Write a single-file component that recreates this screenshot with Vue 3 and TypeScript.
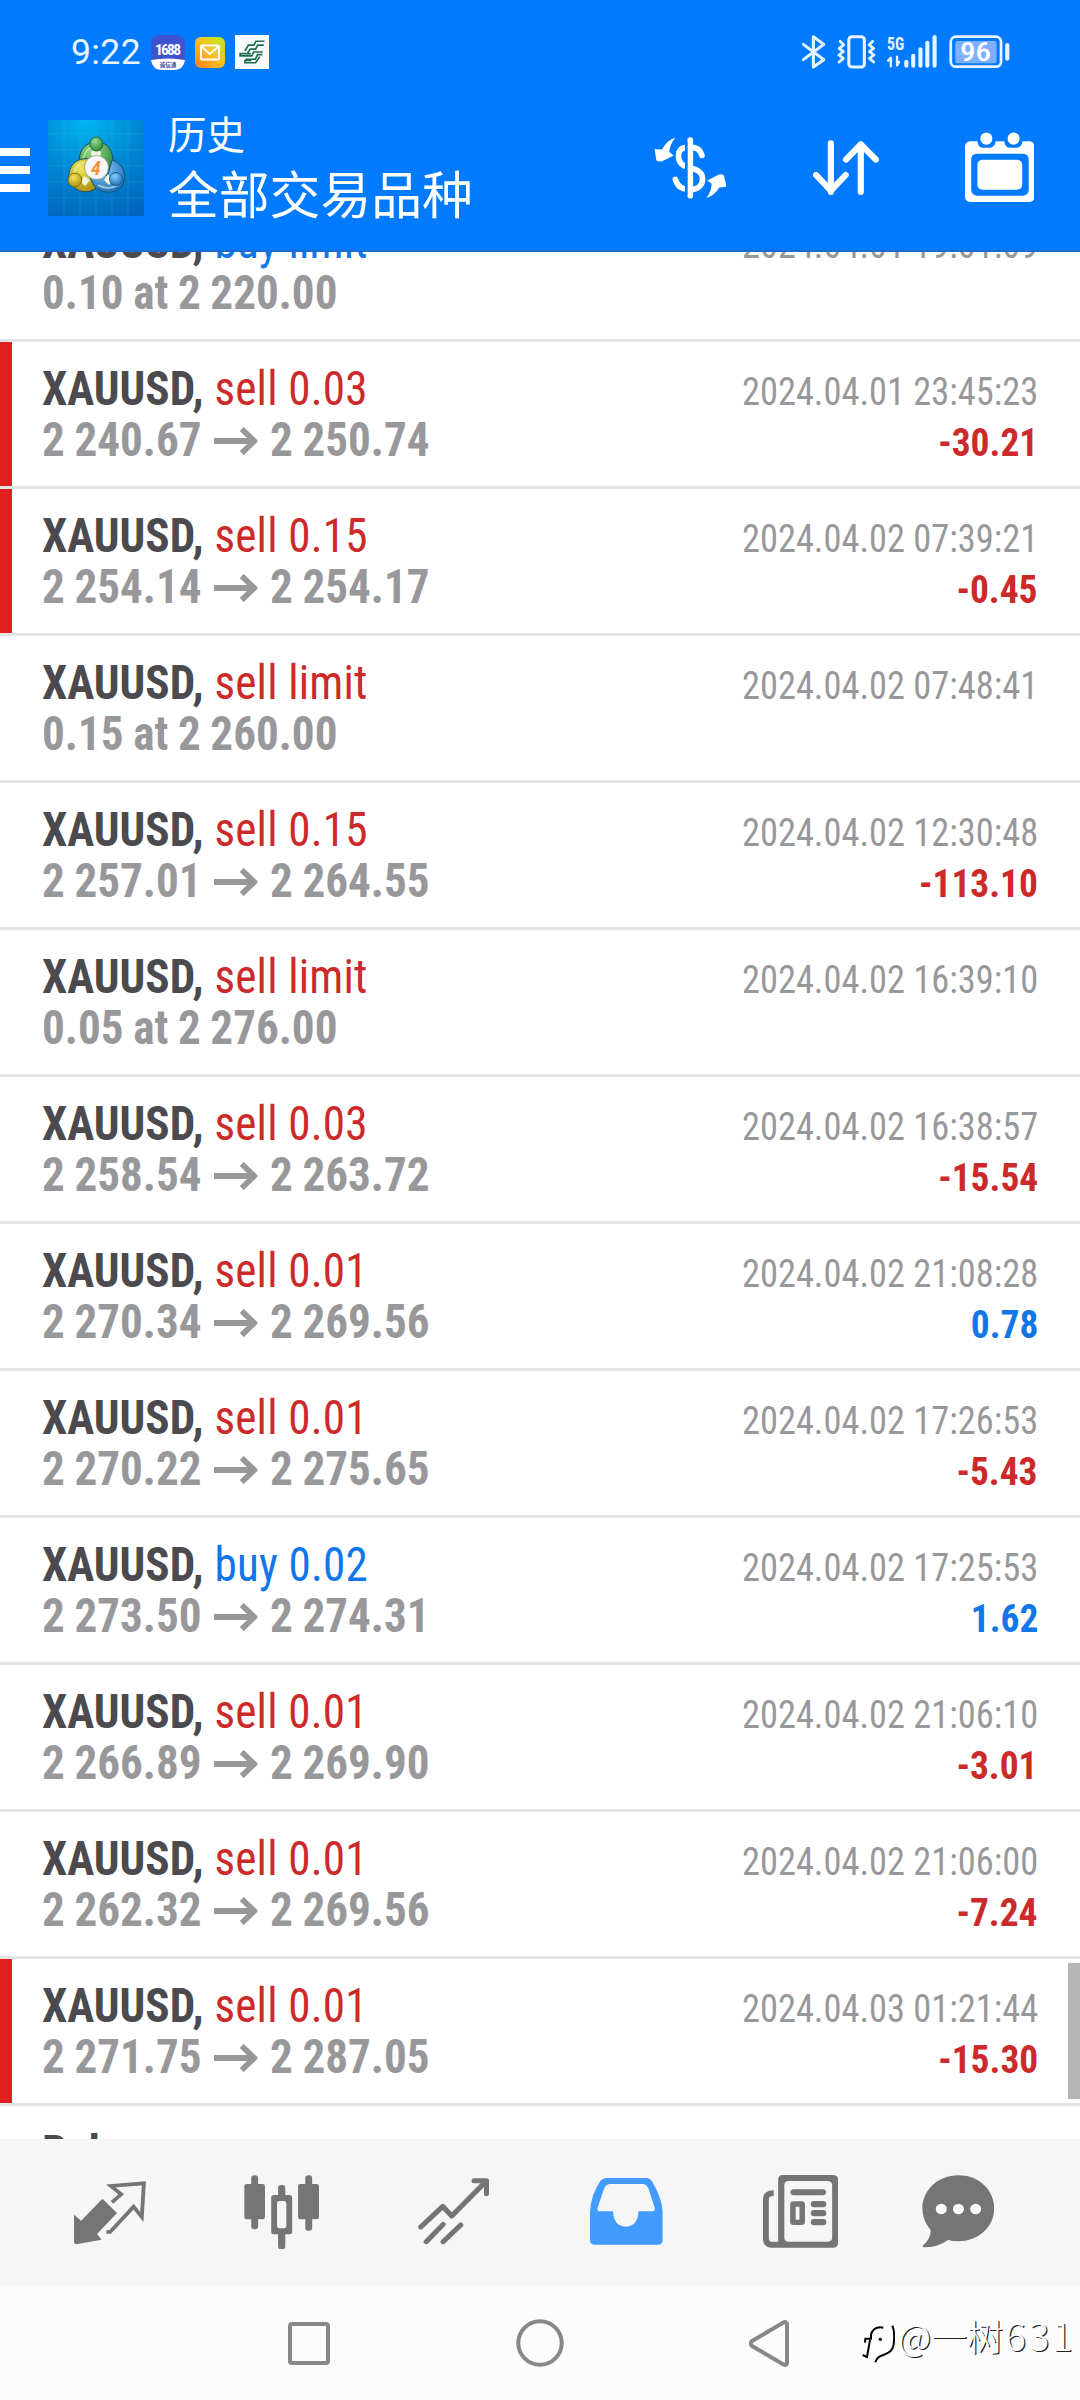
<script setup lang="ts">
interface Entry {
  side: 'buy' | 'sell'
  label: string
  open?: string
  close?: string
  order?: string
  time: string
  profit?: string
  marked?: boolean
}

const entries: Entry[] = [
  { side: 'buy', label: 'buy limit', order: '0.10 at 2 220.00', time: '2024.04.01 19:01:09' },
  { side: 'sell', label: 'sell 0.03', open: '2 240.67', close: '2 250.74', time: '2024.04.01 23:45:23', profit: '-30.21', marked: true },
  { side: 'sell', label: 'sell 0.15', open: '2 254.14', close: '2 254.17', time: '2024.04.02 07:39:21', profit: '-0.45', marked: true },
  { side: 'sell', label: 'sell limit', order: '0.15 at 2 260.00', time: '2024.04.02 07:48:41' },
  { side: 'sell', label: 'sell 0.15', open: '2 257.01', close: '2 264.55', time: '2024.04.02 12:30:48', profit: '-113.10' },
  { side: 'sell', label: 'sell limit', order: '0.05 at 2 276.00', time: '2024.04.02 16:39:10' },
  { side: 'sell', label: 'sell 0.03', open: '2 258.54', close: '2 263.72', time: '2024.04.02 16:38:57', profit: '-15.54' },
  { side: 'sell', label: 'sell 0.01', open: '2 270.34', close: '2 269.56', time: '2024.04.02 21:08:28', profit: '0.78' },
  { side: 'sell', label: 'sell 0.01', open: '2 270.22', close: '2 275.65', time: '2024.04.02 17:26:53', profit: '-5.43' },
  { side: 'buy', label: 'buy 0.02', open: '2 273.50', close: '2 274.31', time: '2024.04.02 17:25:53', profit: '1.62' },
  { side: 'sell', label: 'sell 0.01', open: '2 266.89', close: '2 269.90', time: '2024.04.02 21:06:10', profit: '-3.01' },
  { side: 'sell', label: 'sell 0.01', open: '2 262.32', close: '2 269.56', time: '2024.04.02 21:06:00', profit: '-7.24' },
  { side: 'sell', label: 'sell 0.01', open: '2 271.75', close: '2 287.05', time: '2024.04.03 01:21:44', profit: '-15.30', marked: true },
]

const isLoss = (profit: string) => profit.startsWith('-')
</script>

<template>
  <div class="screen">
    <header class="header">
      <div class="status">
        <span class="clock">9:22</span>
        <svg class="ic-1688" viewBox="0 0 34 35" width="34" height="35">
          <rect width="34" height="34" rx="8" fill="#3d53d0" />
          <path d="M0 25Q17 22 34 25Q33 35 22 35H12Q1 35 0 25Z" fill="#fff" />
          <text x="17" y="19.5" text-anchor="middle" font-family="Roboto" font-stretch="75%" font-weight="700" font-size="15.5" textLength="26" fill="#fff">1688</text>
          <text x="17" y="32" text-anchor="middle" font-family="Noto Sans CJK SC" font-weight="700" font-size="5.5" fill="#3d4a9a">诚信通</text>
        </svg>
        <svg class="ic-mail" viewBox="0 0 30 31" width="30" height="31">
          <defs>
            <linearGradient id="mail" x1="0" y1="1" x2="1" y2="0">
              <stop offset="0" stop-color="#ff7a1c" /><stop offset=".5" stop-color="#f9bf1f" /><stop offset="1" stop-color="#b4ee22" />
            </linearGradient>
          </defs>
          <rect width="30" height="31" rx="6" fill="url(#mail)" />
          <rect x="6" y="8.5" width="18" height="14" rx="1" fill="none" stroke="#fff" stroke-width="2" />
          <path d="M7 10l8 7 8-7" fill="none" stroke="#fff" stroke-width="2" />
        </svg>
        <svg class="ic-bank" viewBox="682 103 99 104" width="34" height="34" preserveAspectRatio="none">
          <rect x="682" y="103" width="99" height="104" fill="#fff" />
          <g fill="none" stroke="#1d6b50" stroke-width="5">
            <path d="M768 122H743L737 134H721L711 152" />
            <path d="M766 134H748L742 146H726L719 158" />
            <path d="M763 155H736L731 167H697V160H728" />
            <path d="M762 163H748L741 177H712" />
            <path d="M754 169L742 188H711V181H730" />
          </g>
        </svg>
        <svg class="ic-system" viewBox="762 104 604 108" width="208" height="36" preserveAspectRatio="none">
          <g fill="none" stroke="#e6f4ff" stroke-linejoin="round" stroke-linecap="round">
            <path d="M766 135L825 181L795 203V112L825 135L766 181" stroke-width="9" />
            <rect x="898" y="112" width="45" height="91" rx="9" stroke-width="9" />
            <path d="M873 126l10 11-13 10 12 10-13 10 13 10-12 11M967 126l-10 11 13 10-12 10 13 10-13 10 12 11" stroke-width="8.5" />
            <path d="M1012 184l8-9V201M1038 172V198L1044 188" stroke-width="7" />
            <path d="M1065 187V199M1085 169V199M1106 150V199M1126 130V199M1147 113V199" stroke-width="12" />
            <rect x="1194" y="112" width="146" height="90" rx="15" stroke-width="8" />
            <path d="M1358 137V178" stroke-width="12" />
          </g>
          <rect x="1207" y="125" width="120" height="67" rx="6" fill="#7fb0ff" />
          <text x="1009" y="151" font-family="Roboto" font-stretch="75%" font-weight="700" font-size="56" textLength="50" lengthAdjust="spacingAndGlyphs" fill="#e6f4ff">5G</text>
          <text x="1221" y="185" font-family="Roboto" font-weight="500" font-size="80" textLength="90" lengthAdjust="spacingAndGlyphs" fill="#fff">96</text>
        </svg>
      </div>

      <div class="toolbar">
        <div class="burger"><i /><i /><i /></div>
        <svg class="logo" viewBox="0 0 96 96" width="96" height="96">
          <defs>
            <radialGradient id="sky" cx=".4" cy="0" r="1.1">
              <stop offset="0" stop-color="#00b4f2" /><stop offset=".5" stop-color="#0088d4" /><stop offset="1" stop-color="#0064bd" />
            </radialGradient>
            <radialGradient id="green" cx=".4" cy=".3" r=".8"><stop offset="0" stop-color="#9ade8c" /><stop offset="1" stop-color="#1f7d35" /></radialGradient>
            <radialGradient id="gold" cx=".4" cy=".3" r=".8"><stop offset="0" stop-color="#f5e655" /><stop offset="1" stop-color="#a08a0c" /></radialGradient>
            <radialGradient id="blue" cx=".4" cy=".3" r=".8"><stop offset="0" stop-color="#84cdfa" /><stop offset="1" stop-color="#1767b4" /></radialGradient>
          </defs>
          <rect width="96" height="96" fill="url(#sky)" />
          <path d="M16 0V96M32 0V96M48 0V96M64 0V96M80 0V96M0 14H96M0 30H96M0 46H96M0 62H96M0 78H96" stroke="#58c4f5" stroke-opacity=".16" stroke-width="1" />
          <g stroke="#15506b" stroke-width="1">
            <path d="M31 42C31 28 39 22 49 22C60 22 66 31 65 45L57 53L39 43Z" fill="url(#green)" />
            <path d="M21 58C20 46 28 37 42 39L40 54L50 66C46 73 32 74 26 67Z" fill="url(#gold)" />
            <path d="M64 40C74 43 78 52 76 61C73 73 58 76 47 67L42 58L60 55Z" fill="url(#blue)" />
          </g>
          <path d="M35 38Q39 26 48 26M26 54Q27 44 37 42M50 65Q60 71 70 65" fill="none" stroke="#e7ffd8" stroke-opacity=".6" stroke-width="1.600" />
          <path d="M43 32L48 28L53 32L52 38H44ZM33 62L36 56L42 60L37 66ZM56 60L60 54L64 60L61 65Z" fill="#eef7dc" />
          <ellipse cx="48.300" cy="24" rx="6.500" ry="7" fill="url(#green)" stroke="#1f6d35" />
          <circle cx="27" cy="60" r="6.800" fill="url(#gold)" stroke="#857512" />
          <circle cx="68" cy="59" r="6.500" fill="url(#blue)" stroke="#17609c" />
          <circle cx="48.500" cy="47.500" r="12" fill="#f6f6f8" stroke="#8a8f78" stroke-width=".7" />
          <text x="48" y="54.500" text-anchor="middle" font-family="Roboto" font-style="italic" font-weight="600" font-size="20" fill="#f0923c">4</text>
        </svg>
        <div class="titles">
          <div class="t1">历史</div>
          <div class="t2">全部交易品种</div>
        </div>
        <div class="actions">
          <svg viewBox="40 51 218 184" width="72.600" height="61.500" class="a1">
            <path d="M104 53Q80 59 64 88L42 87L47 121Q56 125 63 124L99 106L86 96Q87 73 104 53Z" fill="#fff" />
            <path d="M197 234Q222 226 236 202L258 200L250 166Q243 161 235 163L200 181L213 191Q213 214 197 234Z" fill="#fff" />
            <g fill="none" stroke="#fff" stroke-width="17" stroke-linecap="round">
              <path d="M149 60V227" />
              <path d="M184 106C178 83 160 81 149 81M130 83C108 90 108 124 130 137" stroke-width="17" />
              <path d="M104 178Q111 201 130 206M149 145C171 147 186 158 186 177C186 197 170 208 149 209" stroke-width="17" />
            </g>
            <path d="M133 66H140.500V224H133Z" fill="#007bff" />
          </svg>
          <svg viewBox="793 421 192 166" width="66" height="55.300" preserveAspectRatio="none" class="a2">
            <path d="M845 431V577M802 526L845 573L888 526M932 577V434M889 480L932 434L976 480" fill="none" stroke="#fff" stroke-width="18" stroke-linecap="round" stroke-linejoin="round" />
          </svg>
          <svg viewBox="1236 394 202 210" width="69.600" height="70" preserveAspectRatio="none" class="a3">
            <path fill-rule="evenodd" fill="#fff" d="M1251 422H1272Q1274 441 1287 441H1309Q1323 440 1325 422H1350Q1352 441 1366 441H1387Q1401 440 1403 422H1423Q1437 423 1438 437V590Q1437 603 1423 604H1251Q1237 603 1236 590V437Q1237 423 1251 422ZM1270 459Q1254 460 1254 475V569Q1255 584 1270 585H1405Q1420 584 1421 569V475Q1420 460 1405 459Z" />
            <rect x="1272" y="477" width="130" height="90" rx="15" fill="#fff" />
            <ellipse cx="1298" cy="414" rx="17.500" ry="18.500" fill="#fff" /><ellipse cx="1377" cy="414" rx="17.500" ry="18.500" fill="#fff" />
          </svg>
        </div>
      </div>
    </header>

    <main class="list">
      <section v-for="(e, i) in entries" :key="i" class="row" :class="{ marked: e.marked }">
        <div class="left">
          <div class="line"><b class="symbol">XAUUSD,</b><span class="kind" :class="e.side">{{ e.label }}</span></div>
          <div v-if="e.order" class="line price">{{ e.order }}</div>
          <div v-else class="line price">
            <span>{{ e.open }}</span>
            <svg class="arrow" viewBox="0 0 44 28" width="46" height="28" preserveAspectRatio="none">
              <path d="M0 14H40M28 2L40.500 14L28 26" fill="none" stroke="#98989b" stroke-width="5.800" />
            </svg>
            <span>{{ e.close }}</span>
          </div>
        </div>
        <div class="right">
          <div class="time">{{ e.time }}</div>
          <b v-if="e.profit" class="profit" :class="isLoss(e.profit) ? 'sell' : 'buy'">{{ e.profit }}</b>
        </div>
      </section>
      <section class="row">
        <div class="left"><div class="line"><b class="symbol">Balance</b></div></div>
      </section>
      <div class="thumb" />
    </main>

    <nav class="tabs">
      <svg viewBox="215 182 210 191" width="72.300" height="63.700" preserveAspectRatio="none">
        <path d="M299 237L340 278L282 341L295 358L222 372Q215 371 215 365V283L236 301L293 240Q297 236 299 237Z" fill="#757575" />
        <path d="M325 246L352 222L322 197L418 189L412 290L388 259L320 335H309" fill="none" stroke="#757575" stroke-width="11" />
      </svg>
      <svg viewBox="708 164 219 223" width="75.400" height="74.300" preserveAspectRatio="none">
        <g fill="#757575">
          <rect x="709" y="191" width="60" height="106" rx="7" /><rect x="729" y="165" width="20" height="162" rx="9" />
          <rect x="865" y="191" width="61" height="106" rx="7" /><rect x="886" y="165" width="20" height="166" rx="9" />
          <rect x="807" y="194" width="21" height="40" rx="9" /><rect x="807" y="330" width="21" height="57" rx="9" />
          <path fill-rule="evenodd" d="M794 224H841Q848 225 848 231V335Q848 342 841 342H794Q787 342 787 335V231Q787 225 794 224ZM810 242Q804 243 804 249V318Q805 324 810 324H825Q830 324 831 318V249Q830 243 825 242Z" />
        </g>
      </svg>
      <svg viewBox="1213 173 208 200" width="71.600" height="66.700" preserveAspectRatio="none" class="low">
        <path d="M1221 320L1285 258L1311 287L1408 186M1376 181H1412V220M1237 364L1286 312M1286 364L1337 314" fill="none" stroke="#757575" stroke-width="15" stroke-linecap="round" stroke-linejoin="round" />
      </svg>
      <svg viewBox="146 173 211 200" width="72.600" height="66.700" preserveAspectRatio="none" class="low">
        <path fill-rule="evenodd" fill="#429bff" d="M192 173H312Q321 174 326 182Q356 235 357 275V361Q356 372 344 373H158Q147 371 146 361V275Q148 225 176 182Q182 174 192 173ZM202 191Q192 193 188 202L168 262Q166 273 176 273H213Q215 318 250 319Q285 318 287 273H326Q337 272 334 262L315 202Q311 193 302 191Z" />
      </svg>
      <svg viewBox="646 164 218 218" width="75" height="72.700" preserveAspectRatio="none">
        <path fill-rule="evenodd" fill="#757575" d="M702 164H852Q863 166 864 175V370Q863 380 852 382H668Q648 380 646 360V234Q647 211 677 210V227Q664 226 663 236V355Q664 363 670 364H690V175Q692 165 702 164ZM719 182Q708 184 708 193V353Q709 363 719 364H835Q846 363 847 353V193Q846 184 835 182Z" />
        <g fill="#757575">
          <rect x="726" y="207" width="103" height="18" rx="9" />
          <rect x="785" y="242" width="45" height="19" rx="9" /><rect x="785" y="269" width="45" height="19" rx="9" /><rect x="785" y="296" width="45" height="19" rx="9" />
        </g>
        <rect x="733" y="251" width="27" height="55" rx="2" fill="none" stroke="#757575" stroke-width="16" />
      </svg>
      <svg viewBox="1108 164 211 218" width="72.600" height="72.700" preserveAspectRatio="none">
        <path d="M1214 165C1276 165 1318 212 1318 264C1318 320 1272 363 1214 363Q1197 363 1184 359Q1154 381 1114 381Q1107 379 1112 374Q1134 354 1133 329Q1109 300 1109 264C1109 212 1152 165 1214 165Z" fill="#757575" />
        <circle cx="1164" cy="266" r="16" fill="#fff" /><circle cx="1214" cy="266" r="16" fill="#fff" /><circle cx="1264" cy="266" r="16" fill="#fff" />
      </svg>
    </nav>

    <footer class="nav">
      <svg viewBox="0 0 42 43" width="42" height="43" class="n1"><rect x="2" y="2" width="38" height="39" rx="2" fill="none" stroke="#888" stroke-width="4" /></svg>
      <svg viewBox="0 0 48 48" width="48" height="48" class="n2"><circle cx="24" cy="24" r="21.700" fill="none" stroke="#888" stroke-width="4" /></svg>
      <svg viewBox="0 0 40 47" width="40" height="47" class="n3"><path d="M38 4V43Q37 46 34.500 44.500L3 26Q.5 23.500 3 21L34.500 2.500Q37 1 38 4Z" fill="none" stroke="#888" stroke-width="4" stroke-linejoin="round" /></svg>
      <svg viewBox="30 70 106 122" width="35.300" height="40.700" class="n4">
        <path d="M104 78C84 72 66 84 60 104L38 118L46 134L34 166L52 174L70 186C92 170 118 168 126 140V82Z" fill="#fff" />
        <path d="M127 78C134 92 133 118 131 135C127 158 112 160 100 166Q80 172 76 188" fill="none" stroke="#000" stroke-width="6" />
        <path d="M100 84C80 80 68 90 63 104V117H46L45 129M60 121L51 172L38 166" fill="none" stroke="#000" stroke-width="6" />
        <circle cx="91" cy="119" r="5" fill="#000" />
      </svg>
      <span class="mark">@一树<i>631</i></span>
    </footer>
  </div>
</template>

<style>
body { margin: 0; background: #fff; }
</style>

<style scoped>
.screen { width: 1080px; height: 2400px; display: flex; flex-direction: column; overflow: hidden; background: #fff; font-family: 'Roboto Condensed', Roboto, 'Noto Sans CJK SC', sans-serif; font-stretch: 75%; }
svg { display: block; flex: none; }
.header { height: 252px; flex: none; box-sizing: border-box; background: #007bff; border-bottom: 2px solid #1b6cd0; color: #fff; }
.status { height: 104px; display: flex; align-items: center; padding-left: 71px; box-sizing: border-box; }
.clock { width: 80px; font: 450 35.500px/40px Roboto, sans-serif; font-stretch: 100%; letter-spacing: .4px; color: #e8f5ff; }
.ic-mail { margin-left: 9.500px; }
.ic-bank { margin-left: 10px; }
.ic-system { margin-left: 533.500px; }
.toolbar { display: flex; align-items: flex-start; }
.burger { width: 30px; margin-top: 44px; display: flex; flex-direction: column; gap: 10px; }
.burger i { height: 8px; background: #fff; }
.logo { margin: 16px 0 0 18px; }
.titles { margin: -2px 0 0 24px; width: 340px; font-family: 'Noto Sans CJK SC', sans-serif; font-stretch: 100%; white-space: nowrap; }
.t1 { font-size: 38.500px; line-height: 60px; }
.t2 { font-size: 50.800px; line-height: 61px; }
.actions { display: flex; align-items: center; margin: 28px 0 0 145.500px; }
.a1 { margin: 2px 86.500px 0 0; }
.a2 { margin: 2px 86px 0 0; }
.list { height: 1887px; flex: none; position: relative; overflow: hidden; display: flex; flex-direction: column; justify-content: flex-start; }
.row { height: 147px; flex: none; box-sizing: border-box; border-bottom: 3px solid #e4e4e4; display: flex; justify-content: space-between; padding: 22px 42px 0; }
.row:first-child { margin-top: -57px; }
.marked { background: linear-gradient(90deg, #e02020 12px, #fff 12px) padding-box; }
.left { font-size: 47.500px; line-height: 51px; transform: scaleX(.95); transform-origin: left; }
.line { display: flex; align-items: center; height: 51px; white-space: pre; }
.symbol { color: #4a4a4f; margin-right: 11.500px; font-weight: 700; }
.kind { letter-spacing: .2px; }
.price { color: #98989b; font-weight: 700; word-spacing: -.8px; }
.arrow { margin: 0 13px; }
.right { font-size: 39px; line-height: 51px; padding-top: 3px; color: #98989b; display: flex; flex-direction: column; align-items: flex-end; }
.time { transform: scaleX(.934); transform-origin: right; white-space: nowrap; }
.profit { transform: scaleX(.96); transform-origin: right; }
.sell { color: #cc2a2a; }
.buy { color: #1177e8; }
.thumb { position: absolute; right: 0; top: 1711px; width: 12px; height: 136px; background: #b6b6b6; }
.tabs { height: 147px; flex: none; background: #f6f6f6; display: grid; grid-template-columns: 172px 171px 173px 173px 174px 142px; padding-left: 24px; justify-items: center; align-items: start; box-sizing: border-box; padding-top: 36px; }
.tabs svg:nth-child(1) { margin-top: 6px; }
.tabs .low { margin-top: 3px; }
.nav { height: 114px; flex: none; background: #fcfcfc; display: flex; align-items: center; }
.n1 { margin-left: 288px; }
.n2 { margin-left: 186px; }
.n3 { margin-left: 185px; }
.n4 { margin-left: 71px; }
.mark { margin: -18px 0 0 3px; font: 300 36px/48px 'Noto Sans CJK SC', sans-serif; font-stretch: 100%; color: #fff; text-shadow: 1.200px 1.200px 0 #222; white-space: nowrap; }
.mark i { font-style: normal; font-size: 39px; letter-spacing: 2.500px; margin-left: 2px; }
</style>
